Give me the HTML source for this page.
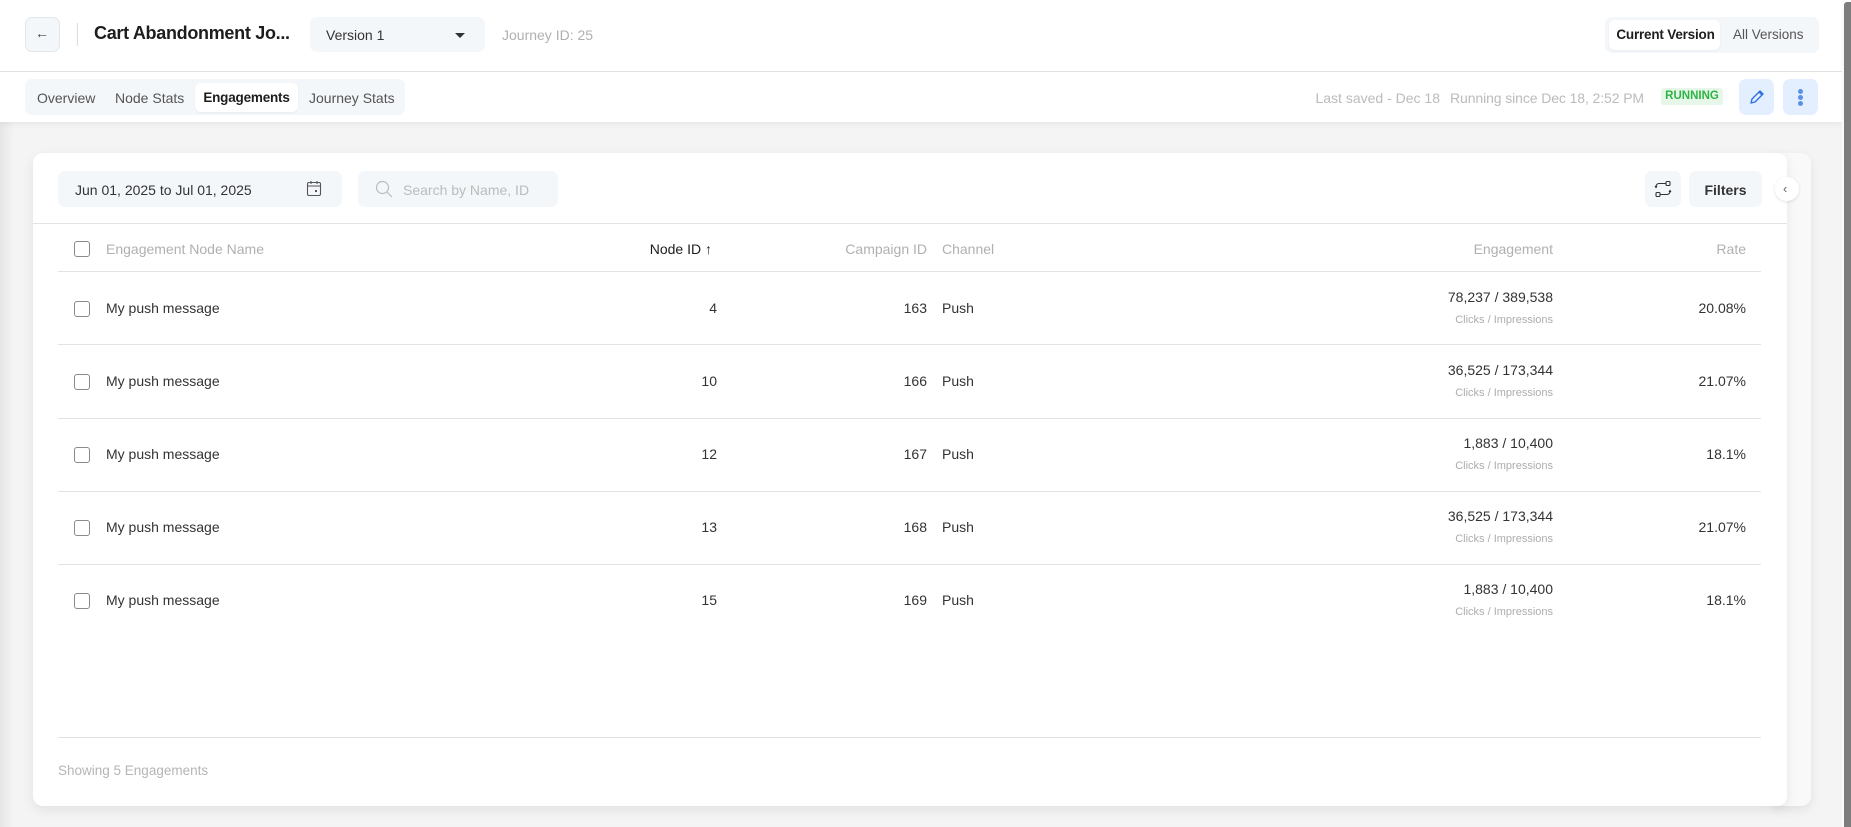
<!DOCTYPE html>
<html><head><meta charset="utf-8"><style>
*{box-sizing:border-box;margin:0;padding:0}
body{width:1851px;height:827px;overflow:hidden;background:#f4f4f4;font-family:"Liberation Sans",sans-serif;color:#2b2b2b;position:relative}
.a{position:absolute}
.t{white-space:nowrap}
.top{left:0;top:0;width:1842px;height:122px;background:#fff;box-shadow:0 2px 6px rgba(0,0,0,.06)}
.btn{background:#f4f7fa;border-radius:7px}
.g{color:#b0b0b0}
.cb{width:16px;height:16px;border:1.3px solid #8a8a8a;border-radius:3px;background:#fff}
.hl{height:1px;background:#e3e3e3}
.cell{font-size:14px;color:#333}
.sub{font-size:11px;color:#adadad}
</style></head><body>
<div class="a" style="left:0;top:0;width:14px;height:827px;background:linear-gradient(90deg,#e6e6e6,#f4f4f4)"></div>
<div class="a top"></div>
<div class="a hl" style="left:0;top:71px;width:1842px;background:#e2e2e2"></div>
<!-- header row 1 -->
<div class="a btn" style="left:25px;top:17px;width:35px;height:35px;border:1px solid #e2e6ea"></div>
<div class="a t" style="left:35px;top:25px;font-size:14px;color:#444">←</div>
<div class="a" style="left:77px;top:23px;width:1px;height:23px;background:#ddd"></div>
<div class="a t" style="left:94px;top:23px;font-size:18px;font-weight:bold;letter-spacing:-0.3px;color:#1d1d1d">Cart Abandonment Jo...</div>
<div class="a btn" style="left:310px;top:17px;width:175px;height:35px"></div>
<div class="a t" style="left:326px;top:27px;font-size:14px;color:#333">Version 1</div>
<div class="a" style="left:455px;top:33px;width:0;height:0;border-left:5px solid transparent;border-right:5px solid transparent;border-top:5px solid #333"></div>
<div class="a t g" style="left:502px;top:27px;font-size:14px">Journey ID: 25</div>
<div class="a btn" style="left:1605px;top:17px;width:214px;height:36px"></div>
<div class="a" style="left:1609px;top:20px;width:111px;height:30px;background:#fff;border-radius:6px;box-shadow:0 1px 2px rgba(0,0,0,.05)"></div>
<div class="a t" style="left:1614px;top:27px;width:103px;text-align:center;font-size:13.5px;font-weight:bold;letter-spacing:-0.2px;color:#1d1d1d">Current Version</div>
<div class="a t" style="left:1733px;top:27px;font-size:13.5px;color:#555">All Versions</div>
<!-- header row 2 -->
<div class="a btn" style="left:25px;top:79px;width:380px;height:36px"></div>
<div class="a t" style="left:37px;top:90px;font-size:14px;color:#555">Overview</div>
<div class="a t" style="left:115px;top:90px;font-size:14px;color:#555">Node Stats</div>
<div class="a" style="left:195px;top:83px;width:103px;height:29px;background:#fff;border-radius:6px;box-shadow:0 1px 2px rgba(0,0,0,.05)"></div>
<div class="a t" style="left:196px;top:90px;width:101px;text-align:center;font-size:13.5px;font-weight:bold;letter-spacing:-0.2px;color:#1d1d1d">Engagements</div>
<div class="a t" style="left:309px;top:90px;font-size:14px;color:#555">Journey Stats</div>
<div class="a t" style="left:1240px;top:90px;width:200px;text-align:right;font-size:14px;color:#bbb">Last saved - Dec 18</div>
<div class="a t" style="left:1443px;top:90px;width:201px;text-align:right;font-size:14px;letter-spacing:-0.1px;color:#bbb">Running since Dec 18, 2:52 PM</div>
<div class="a" style="left:1661px;top:88px;width:62px;height:17px;background:#e6f7ea;border-radius:3px"></div>
<div class="a t" style="left:1661px;top:90px;width:62px;text-align:center;font-size:11.5px;font-weight:bold;color:#2fb344">RUNNING</div>
<div class="a" style="left:1739px;top:79px;width:35px;height:36px;background:#e3efff;border-radius:7px"></div>
<svg class="a" style="left:1748px;top:88px" width="18" height="18" viewBox="0 0 18 18"><path d="M3 15l1-4 8-8 3 3-8 8z M11 4l3 3" fill="none" stroke="#2f6fe0" stroke-width="1.4" stroke-linejoin="round"/></svg>
<div class="a" style="left:1783px;top:79px;width:35px;height:36px;background:#e3efff;border-radius:7px"></div>
<div class="a" style="left:1798px;top:89px;width:5px;height:5px;border-radius:50%;background:#5b8fe8"></div>
<div class="a" style="left:1798px;top:95px;width:5px;height:5px;border-radius:50%;background:#5b8fe8"></div>
<div class="a" style="left:1798px;top:101px;width:5px;height:5px;border-radius:50%;background:#5b8fe8"></div>
<!-- back panel & card -->
<div class="a" style="left:1770px;top:153px;width:41px;height:653px;background:#f9f9f9;border-radius:10px;box-shadow:0 4px 10px rgba(0,0,0,.08)"></div>
<div class="a" style="left:33px;top:153px;width:1754px;height:653px;background:#fff;border-radius:10px;box-shadow:0 4px 12px rgba(0,0,0,.08)"></div>
<div class="a" style="left:1775px;top:177px;width:24px;height:24px;border-radius:50%;background:#fff;box-shadow:0 1px 3px rgba(0,0,0,.12)"></div>
<div class="a t" style="left:1783px;top:181px;font-size:13px;color:#666">‹</div>
<!-- toolbar -->
<div class="a btn" style="left:58px;top:171px;width:284px;height:36px"></div>
<div class="a t" style="left:75px;top:182px;font-size:14px;color:#333">Jun 01, 2025 to Jul 01, 2025</div>
<svg class="a" style="left:306px;top:180px" width="16" height="17" viewBox="0 0 16 17"><rect x="1.5" y="2.5" width="13" height="13" rx="1.5" fill="none" stroke="#555" stroke-width="1.1"/><path d="M1.5 6h13M5 1v3M11 1v3" stroke="#555" stroke-width="1.1"/><rect x="9" y="10" width="2" height="2" fill="#555"/></svg>
<div class="a btn" style="left:358px;top:171px;width:200px;height:36px"></div>
<svg class="a" style="left:375px;top:180px" width="18" height="18" viewBox="0 0 18 18"><circle cx="7.5" cy="7.5" r="6" fill="none" stroke="#bbb" stroke-width="1.2"/><path d="M12 12l5 5" stroke="#bbb" stroke-width="1.2"/></svg>
<div class="a t" style="left:403px;top:182px;font-size:14px;color:#bbb">Search by Name, ID</div>
<div class="a btn" style="left:1645px;top:171px;width:36px;height:36px"></div>
<svg class="a" style="left:1654px;top:180px" width="18" height="18" viewBox="0 0 18 18"><rect x="12" y="1.5" width="4" height="4" rx="1" fill="none" stroke="#333" stroke-width="1.1"/><rect x="2" y="12.5" width="4" height="4" rx="1" fill="none" stroke="#333" stroke-width="1.1"/><path d="M12 3.5H5a3 3 0 0 0-3 3v1M1 6l1 1.5 1-1.5M6 14.5h7a3 3 0 0 0 3-3v-1M15 12l1-1.5 1 1.5" fill="none" stroke="#333" stroke-width="1.1"/></svg>
<div class="a btn" style="left:1689px;top:171px;width:73px;height:36px"></div>
<div class="a t" style="left:1689px;top:182px;width:73px;text-align:center;font-size:14px;font-weight:bold;color:#333">Filters</div>
<div class="a hl" style="left:33px;top:223px;width:1754px"></div>
<!-- table header -->
<div class="a cb" style="left:74px;top:241px"></div>
<div class="a t g" style="left:106px;top:241px;font-size:14px">Engagement Node Name</div>
<div class="a t" style="left:600px;top:241px;width:112px;text-align:right;font-size:14px;color:#1d1d1d">Node ID ↑</div>
<div class="a t g" style="left:800px;top:241px;width:127px;text-align:right;font-size:14px">Campaign ID</div>
<div class="a t g" style="left:942px;top:241px;font-size:14px">Channel</div>
<div class="a t g" style="left:1400px;top:241px;width:153px;text-align:right;font-size:14px">Engagement</div>
<div class="a t g" style="left:1640px;top:241px;width:106px;text-align:right;font-size:14px">Rate</div>
<div class="a hl" style="left:58px;top:271px;width:1703px"></div>

<div class="a" style="left:0;top:272px">
<div class="a cb" style="left:74px;top:29px"></div>
<div class="a t cell" style="left:106px;top:28px">My push message</div>
<div class="a t cell" style="left:600px;top:28px;width:117px;text-align:right">4</div>
<div class="a t cell" style="left:800px;top:28px;width:127px;text-align:right">163</div>
<div class="a t cell" style="left:942px;top:28px">Push</div>
<div class="a t cell" style="left:1400px;top:17px;width:153px;text-align:right">78,237 / 389,538</div>
<div class="a t sub" style="left:1400px;top:42px;width:153px;text-align:right">Clicks / Impressions</div>
<div class="a t cell" style="left:1640px;top:28px;width:106px;text-align:right">20.08%</div>
<div class="a hl" style="left:58px;top:72px;width:1703px"></div>
</div>
<div class="a" style="left:0;top:345px">
<div class="a cb" style="left:74px;top:29px"></div>
<div class="a t cell" style="left:106px;top:28px">My push message</div>
<div class="a t cell" style="left:600px;top:28px;width:117px;text-align:right">10</div>
<div class="a t cell" style="left:800px;top:28px;width:127px;text-align:right">166</div>
<div class="a t cell" style="left:942px;top:28px">Push</div>
<div class="a t cell" style="left:1400px;top:17px;width:153px;text-align:right">36,525 / 173,344</div>
<div class="a t sub" style="left:1400px;top:42px;width:153px;text-align:right">Clicks / Impressions</div>
<div class="a t cell" style="left:1640px;top:28px;width:106px;text-align:right">21.07%</div>
<div class="a hl" style="left:58px;top:73px;width:1703px"></div>
</div>
<div class="a" style="left:0;top:418px">
<div class="a cb" style="left:74px;top:29px"></div>
<div class="a t cell" style="left:106px;top:28px">My push message</div>
<div class="a t cell" style="left:600px;top:28px;width:117px;text-align:right">12</div>
<div class="a t cell" style="left:800px;top:28px;width:127px;text-align:right">167</div>
<div class="a t cell" style="left:942px;top:28px">Push</div>
<div class="a t cell" style="left:1400px;top:17px;width:153px;text-align:right">1,883 / 10,400</div>
<div class="a t sub" style="left:1400px;top:42px;width:153px;text-align:right">Clicks / Impressions</div>
<div class="a t cell" style="left:1640px;top:28px;width:106px;text-align:right">18.1%</div>
<div class="a hl" style="left:58px;top:73px;width:1703px"></div>
</div>
<div class="a" style="left:0;top:491px">
<div class="a cb" style="left:74px;top:29px"></div>
<div class="a t cell" style="left:106px;top:28px">My push message</div>
<div class="a t cell" style="left:600px;top:28px;width:117px;text-align:right">13</div>
<div class="a t cell" style="left:800px;top:28px;width:127px;text-align:right">168</div>
<div class="a t cell" style="left:942px;top:28px">Push</div>
<div class="a t cell" style="left:1400px;top:17px;width:153px;text-align:right">36,525 / 173,344</div>
<div class="a t sub" style="left:1400px;top:42px;width:153px;text-align:right">Clicks / Impressions</div>
<div class="a t cell" style="left:1640px;top:28px;width:106px;text-align:right">21.07%</div>
<div class="a hl" style="left:58px;top:73px;width:1703px"></div>
</div>
<div class="a" style="left:0;top:564px">
<div class="a cb" style="left:74px;top:29px"></div>
<div class="a t cell" style="left:106px;top:28px">My push message</div>
<div class="a t cell" style="left:600px;top:28px;width:117px;text-align:right">15</div>
<div class="a t cell" style="left:800px;top:28px;width:127px;text-align:right">169</div>
<div class="a t cell" style="left:942px;top:28px">Push</div>
<div class="a t cell" style="left:1400px;top:17px;width:153px;text-align:right">1,883 / 10,400</div>
<div class="a t sub" style="left:1400px;top:42px;width:153px;text-align:right">Clicks / Impressions</div>
<div class="a t cell" style="left:1640px;top:28px;width:106px;text-align:right">18.1%</div>
</div>

<div class="a hl" style="left:58px;top:737px;width:1703px"></div>
<div class="a t" style="left:58px;top:763px;font-size:13.5px;color:#b5b5b5">Showing 5 Engagements</div>
<div class="a" style="left:1842px;top:0;width:9px;height:827px;background:#fafafa"></div>
<div class="a" style="left:1844px;top:2px;width:7px;height:825px;background:#7d7d7d;border-radius:3px 0 0 0"></div>
</body></html>
